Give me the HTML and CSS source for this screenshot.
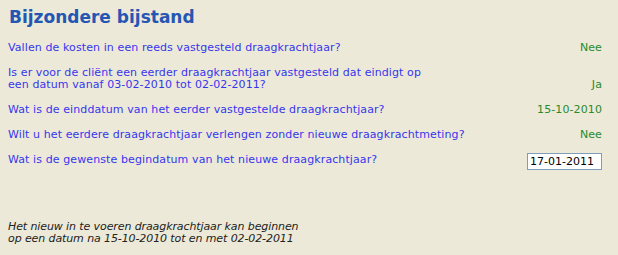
FILE: index.html
```html
<!DOCTYPE html>
<html lang="nl">
<head>
<meta charset="utf-8">
<title>Bijzondere bijstand</title>
<link rel="stylesheet" href="styles.css">
</head>
<body>
<div class="page">
  <h1 class="title">Bijzondere bijstand</h1>
  <div class="rows">
    <div class="row">
      <div class="question">Vallen de kosten in een reeds vastgesteld draagkrachtjaar?</div>
      <div class="answer">Nee</div>
    </div>
    <div class="row">
      <div class="question">Is er voor de cliënt een eerder draagkrachtjaar vastgesteld dat eindigt op<br>een datum vanaf 03-02-2010 tot 02-02-2011?</div>
      <div class="answer">Ja</div>
    </div>
    <div class="row">
      <div class="question">Wat is de einddatum van het eerder vastgestelde draagkrachtjaar?</div>
      <div class="answer">15-10-2010</div>
    </div>
    <div class="row">
      <div class="question">Wilt u het eerdere draagkrachtjaar verlengen zonder nieuwe draagkrachtmeting?</div>
      <div class="answer">Nee</div>
    </div>
    <div class="row row-input">
      <div class="question">Wat is de gewenste begindatum van het nieuwe draagkrachtjaar?</div>
      <input class="date-input" type="text" value="17-01-2011">
    </div>
  </div>
  <p class="note">Het nieuw in te voeren draagkrachtjaar kan beginnen<br>op een datum na 15-10-2010 tot en met 02-02-2011</p>
</div>
</body>
</html>
```

FILE: styles.css
```css
html, body {
  margin: 0;
  padding: 0;
  background: #ece9d8;
}
body {
  font-family: "DejaVu Sans", Verdana, sans-serif;
  font-size: 11px;
  line-height: 12px;
  letter-spacing: 0.1px;
  width: 618px;
  height: 255px;
  overflow: hidden;
}
.page {
  padding: 7px 16px 0 8px;
}
.title {
  margin: 0 0 0 1px;
  font-size: 17px;
  line-height: 20px;
  font-weight: bold;
  letter-spacing: 0;
  color: #2556b3;
}
.rows {
  margin-top: 15px;
  display: flex;
  flex-direction: column;
  gap: 13px;
}
.row {
  display: flex;
  justify-content: space-between;
  align-items: flex-end;
}
.question {
  color: #3636ee;
}
.answer {
  color: #2a8a2a;
}
.row-input {
  align-items: flex-start;
}
.date-input {
  box-sizing: border-box;
  width: 75px;
  height: 17px;
  margin: -1px 0 0 0;
  padding: 0 2px;
  border: 1px solid #7f9db9;
  background: #ffffff;
  font-family: "DejaVu Sans", Verdana, sans-serif;
  font-size: 11px;
  letter-spacing: 0;
  color: #000;
}
.note {
  margin: 51px 0 0 0;
  font-style: italic;
  letter-spacing: -0.1px;
  color: #222;
}
```
